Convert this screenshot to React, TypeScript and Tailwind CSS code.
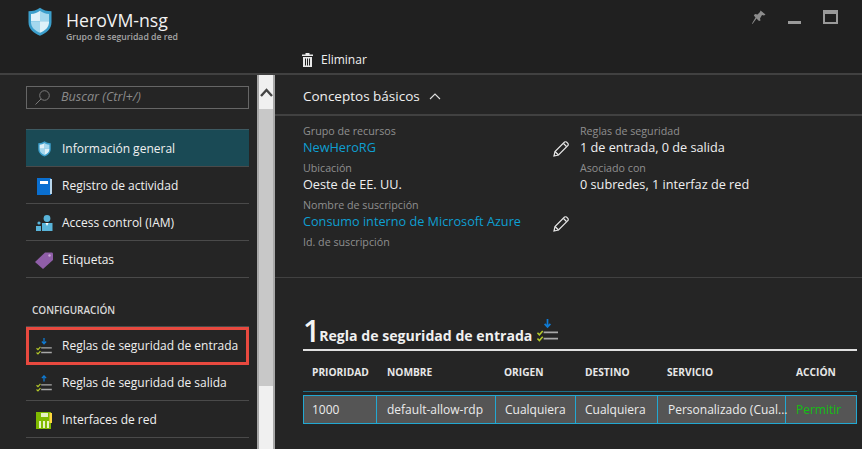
import React from 'react';

const font = { fontFamily: '"Open Sans", "Noto Sans", sans-serif' };

function Shield({ size }: { size: number }) {
  return (
    <svg width={size} height={size * 1.22} viewBox="0 0 24 29">
      <path d="M12 0.5 C15 3 19 4 23.5 4 V15 C23.5 22 18 26 12 28.5 C6 26 0.5 22 0.5 15 V4 C5 4 9 3 12 0.5 Z" fill="#3c9fcc" />
      <path d="M12 3.5 C14.5 5.5 17.5 6.5 21 6.8 V14 H12 Z" fill="#a5d8ee" />
      <path d="M12 3.5 C9.5 5.5 6.5 6.5 3 6.8 V14 H12 Z" fill="#dff1f9" />
      <path d="M3 14 H12 V25.5 C7 23.5 3 20 3 15 Z" fill="#a5d8ee" />
      <path d="M21 14 H12 V25.5 C17 23.5 21 20 21 15 Z" fill="#dff1f9" />
    </svg>
  );
}

function Book() {
  return (
    <svg width="15" height="17" viewBox="0 0 15 17">
      <rect x="0" y="0" width="14" height="17" fill="#0a6fd0" />
      <rect x="13" y="1" width="2" height="15" fill="#b9d6ea" />
      <rect x="3" y="3" width="8" height="3" fill="#ffffff" />
    </svg>
  );
}

function People() {
  return (
    <svg width="17" height="16" viewBox="0 0 17 16">
      <circle cx="11" cy="3.5" r="3.4" fill="#59b4d9" />
      <path d="M6 8 H16.5 V16 H6 Z" fill="#59b4d9" />
      <path d="M9.5 8 L11 11 L12.5 8 Z" fill="#ffffff" />
      <circle cx="3" cy="8" r="1.6" fill="#59b4d9" />
      <path d="M0 11 H5 V16 H0 Z" fill="#59b4d9" />
    </svg>
  );
}

function Tag() {
  return (
    <svg width="18" height="17" viewBox="0 0 18 17">
      <path d="M0 10 L10 0.5 H17 Q18 0.5 18 2 V8 L8 17 Z" fill="#8f5ea8" />
      <circle cx="14.5" cy="3.5" r="1.2" fill="#c8a8d6" />
    </svg>
  );
}

function Rules({ up, w = 16, h = 17 }: { up?: boolean; w?: number; h?: number }) {
  return (
    <svg width={w} height={h} viewBox="0 0 22 24">
      {up ? (
        <path d="M11 9 V1.5 M8 4.5 L11 1.2 L14 4.5" stroke="#0f7bd4" strokeWidth="1.8" fill="none" />
      ) : (
        <path d="M11 0 V8 M8 5 L11 8.3 L14 5" stroke="#0f7bd4" strokeWidth="1.8" fill="none" />
      )}
      <path d="M0.5 14.5 L2.5 16.5 L6 12.5 M0.5 20.5 L2.5 22.5 L6 18.5" stroke="#b4c92a" strokeWidth="1.6" fill="none" />
      <path d="M7 14 H22 M7 20.5 H22" stroke="#a8a8a8" strokeWidth="1.9" fill="none" />
    </svg>
  );
}

function Nic() {
  return (
    <svg width="16" height="17" viewBox="0 0 16 17">
      <rect x="0" y="0" width="15" height="17" fill="#7fba00" />
      <rect x="13.5" y="1" width="2.5" height="10" fill="#ffd83d" />
      <rect x="5" y="1" width="7" height="4" fill="#e6f2c2" />
      <rect x="3" y="9" width="2" height="7" fill="#e6f2c2" />
      <rect x="7" y="9" width="2" height="7" fill="#e6f2c2" />
      <rect x="11" y="9" width="2" height="7" fill="#e6f2c2" />
    </svg>
  );
}

function Pencil() {
  return (
    <svg width="16" height="16" viewBox="0 0 16 16" fill="none" stroke="#e8e8e8" strokeWidth="1.2">
      <path d="M1 15 L2 10.5 L11.5 1 Q12.5 0.5 13.5 1 L15 2.5 Q15.5 3.5 15 4.5 L5.5 14 Z" />
      <path d="M2 10.5 L5.5 14 M10.5 2.5 L13.5 5.5" />
    </svg>
  );
}

function NavItem({ icon, label, active, boxed }: { icon: React.ReactNode; label: string; active?: boolean; boxed?: boolean }) {
  return (
    <div
      className={`flex items-center text-[12px] text-[#f0f0f0] ${active ? 'bg-[#1a4a55]' : ''} ${boxed ? 'border-[3px] border-[#e8493f] h-[38px] -mb-[1px]' : 'h-[37px] pt-[2px] border-b border-[#4a4a4a]'}`}
    >
      <span className={`flex justify-center w-[36px] ${boxed ? '-ml-[3px]' : ''}`}>{icon}</span>
      <span>{label}</span>
    </div>
  );
}

function Field({ label, value, link }: { label: string; value?: string; link?: boolean }) {
  return (
    <div className="h-[37px]">
      <div className="text-[10.7px] leading-[15px] text-[#8f8f8f]">{label}</div>
      {value && <div className={`text-[12.7px] leading-[16px] ${link ? 'text-[#0e9fd2]' : 'text-[#f0f0f0]'}`}>{value}</div>}
    </div>
  );
}

const cols = 'grid grid-cols-[73px_119px_80px_82px_128px_1fr]';
const cell = 'leading-[27px] whitespace-nowrap border-r border-[#22a8d2]';

export default function App() {
  return (
    <div className="w-[862px] h-[449px] overflow-hidden bg-[#252525] flex flex-col" style={font}>
      <header className="relative h-[75px] shrink-0 bg-[#202020] border-b-2 border-[#414141]">
        <div className="flex pl-[28px] pt-[7px]">
          <Shield size={24} />
          <div className="ml-[14px] pt-[1px]">
            <div className="text-[17.7px] leading-[24px] text-[#f2f2f2]">HeroVM-nsg</div>
            <div className="text-[8.7px] leading-[10px] font-semibold text-[#a5a5a5]">Grupo de seguridad de red</div>
          </div>
        </div>
        <div className="flex items-center gap-[8px] pl-[302px] mt-[9px]">
          <svg width="11" height="14" viewBox="0 0 11 14" fill="#e8e8e8">
            <rect x="0" y="1.5" width="11" height="1.5" />
            <rect x="3.5" y="0" width="4" height="2" />
            <path d="M1 4 H10 V14 H1 Z M3 5.5 V12.5 H4 V5.5 Z M5 5.5 V12.5 H6 V5.5 Z M7 5.5 V12.5 H8 V5.5 Z" fillRule="evenodd" />
          </svg>
          <span className="text-[12px] text-[#f0f0f0]">Eliminar</span>
        </div>
        <div className="absolute right-[24px] top-[10px] flex items-start gap-[22px]">
          <svg width="14" height="15" viewBox="0 0 14 15" fill="#8c8c8c">
            <path d="M8.5 0.5 L13.5 4.5 L12 5.5 L10 5 L8 8.5 L8.5 10.5 L7 11 L4.5 8.5 L0.5 14 L0 13.5 L3.5 7.5 L1.8 5.5 L3 4 L5.5 4.5 L8 2 Z" />
          </svg>
          <div className="w-[13px] h-[3px] bg-[#9a9a9a] mt-[11px]" />
          <div className="w-[15px] h-[14px] border-2 border-t-[4px] border-[#9a9a9a]" />
        </div>
      </header>

      <div className="flex flex-1 min-h-0">
        <aside className="w-[257px] shrink-0 pl-[26px] pr-[8px] pt-[11px]">
          <div className="flex items-center h-[23px] border border-[#666666] pl-[8px]">
            <svg width="15" height="15" viewBox="0 0 15 15" fill="none" stroke="#7a7a7a" strokeWidth="1">
              <circle cx="9.5" cy="5.5" r="4.8" />
              <path d="M6 9 L0.5 14.5" />
            </svg>
            <span className="ml-[11px] text-[12.6px] italic text-[#8a8a8a]">Buscar (Ctrl+/)</span>
          </div>
          <div className="mt-[20px] border-t border-[#3e5a62]">
            <NavItem active icon={<Shield size={13} />} label="Información general" />
            <NavItem icon={<Book />} label="Registro de actividad" />
            <NavItem icon={<People />} label="Access control (IAM)" />
            <NavItem icon={<Tag />} label="Etiquetas" />
          </div>
          <div className="mt-[25px] pl-[6px] h-[14px] text-[10px] leading-[14px] font-semibold text-[#d8d8d8]">CONFIGURACIÓN</div>
          <div className="border-t border-[#4a4a4a] mt-[9px]">
            <NavItem boxed icon={<Rules />} label="Reglas de seguridad de entrada" />
            <NavItem icon={<Rules up />} label="Reglas de seguridad de salida" />
            <NavItem icon={<Nic />} label="Interfaces de red" />
          </div>
        </aside>

        <div className="w-[18px] shrink-0 flex flex-col bg-[#f0f0f0] border-x-2 border-[#a8a8a8]">
          <div className="h-[34px] flex items-center justify-center">
            <svg width="13" height="9" viewBox="0 0 13 9" fill="none" stroke="#444444" strokeWidth="2.4">
              <path d="M1 8 L6.5 2 L12 8" />
            </svg>
          </div>
          <div className="h-[277px] bg-[#c8c8c8]" />
          <div className="flex-1" />
        </div>

        <main className="flex-1 min-w-0">
          <div className="h-[41px] flex items-center gap-[9px] pl-[28px] border-b-2 border-[#414141] pt-[4px]">
            <span className="text-[13.5px] text-[#f0f0f0]">Conceptos básicos</span>
            <svg width="12" height="7" viewBox="0 0 12 7" fill="none" stroke="#e0e0e0" strokeWidth="1.1">
              <path d="M1 6 L6 1 L11 6" />
            </svg>
          </div>
          <div className="h-[162px] border-b border-[#414141] pl-[28px] pt-[8px] grid grid-cols-[277px_1fr] relative">
            <div>
              <Field label="Grupo de recursos" value="NewHeroRG" link />
              <Field label="Ubicación" value="Oeste de EE. UU." />
              <Field label="Nombre de suscripción" value="Consumo interno de Microsoft Azure" link />
              <Field label="Id. de suscripción" />
            </div>
            <div>
              <Field label="Reglas de seguridad" value="1 de entrada, 0 de salida" />
              <Field label="Asociado con" value="0 subredes, 1 interfaz de red" />
            </div>
            <span className="absolute left-[278px] top-[25px]"><Pencil /></span>
            <span className="absolute left-[278px] top-[100px]"><Pencil /></span>
          </div>

          <div className="pl-[28px] pr-[5px] pt-[36px]">
            <div className="flex items-end h-[37px] border-b-2 border-[#e0e0e0] pb-[3px]">
              <span className="text-[30px] leading-[30px] font-semibold text-[#f5f5f5] -mr-[1px]">1</span>
              <span className="text-[14.1px] leading-[20px] font-bold text-[#f0f0f0]">Regla de seguridad de entrada</span>
              <span className="ml-[5px] mb-[4px]"><Rules w={21} h={23} /></span>
            </div>
            <div className={`${cols} h-[41px] items-center border-b border-[#1c6f8a] text-[10.2px] font-bold text-[#e8e8e8] pt-[4px]`}>
              <span className="pl-[9px]">PRIORIDAD</span>
              <span className="pl-[11px]">NOMBRE</span>
              <span className="pl-[9px]">ORIGEN</span>
              <span className="pl-[10px]">DESTINO</span>
              <span className="pl-[10px]">SERVICIO</span>
              <span className="pl-[11px]">ACCIÓN</span>
            </div>
            <div className={`${cols} h-[29px] mt-[3px] items-stretch border border-[#22a8d2] bg-[#555555] text-[12px] text-[#ececec]`}>
              <span className={`${cell} pl-[8px]`}>1000</span>
              <span className={`${cell} pl-[10px]`}>default-allow-rdp</span>
              <span className={`${cell} pl-[9px]`}>Cualquiera</span>
              <span className={`${cell} pl-[9px]`}>Cualquiera</span>
              <span className={`${cell} pl-[10px]`}>Personalizado (Cual...</span>
              <span className="pl-[10px] leading-[27px] text-[#12c012]">Permitir</span>
            </div>
          </div>
        </main>
      </div>
    </div>
  );
}
